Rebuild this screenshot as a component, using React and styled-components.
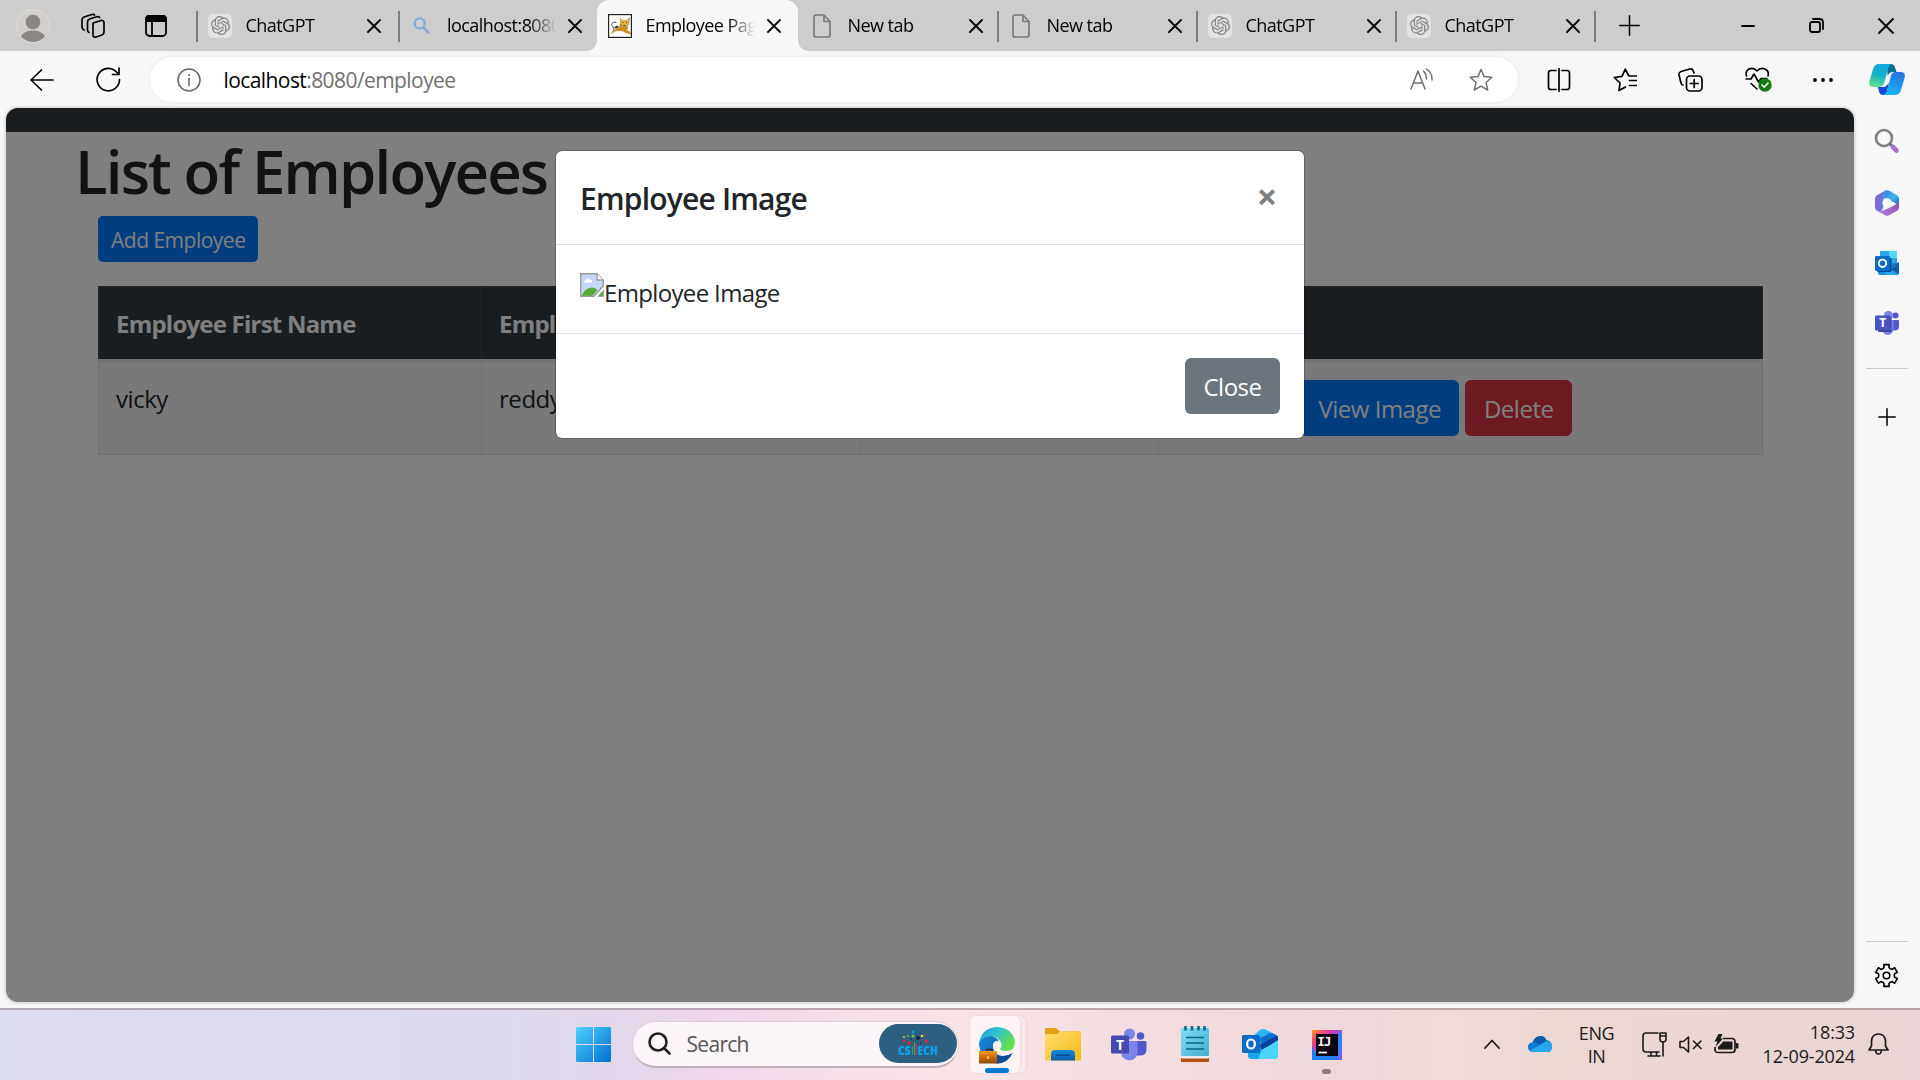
import React from 'react';
import styled, { createGlobalStyle } from 'styled-components';
import { SiOpenai } from 'react-icons/si';

const Global = createGlobalStyle`
  *, *::before, *::after { box-sizing: border-box; }
  html, body { margin: 0; padding: 0; }
  body { overflow: hidden; font-family: "Open Sans", "Noto Sans", sans-serif; color: #000; }
  button { font-family: inherit; border: 0; padding: 0; background: none; color: inherit; }
`;

const Desktop = styled.div`
  width: 1920px;
  height: 1080px;
  display: flex;
  flex-direction: column;
  background: #f7f7f7;
`;

/* ---------- tab strip ---------- */
const TabStrip = styled.header`
  height: 51px;
  flex: none;
  display: flex;
  background: #cdcdcd;
`;
const StripTools = styled.div`
  width: 196px;
  display: flex;
  align-items: center;
  padding-left: 16px;
  svg { flex: none; display: block; }
`;
const ToolGap = styled.span`
  width: ${(p) => p.$w}px;
  flex: none;
`;
const TabItem = styled.div`
  width: ${(p) => p.$w}px;
  flex: none;
  display: flex;
  align-items: center;
  padding-left: 10px;
  border-style: solid;
  border-color: transparent;
  border-image: ${(p) =>
    p.$bare ? 'none' : 'linear-gradient(transparent 12px, #7d7d7d 12px, #7d7d7d 41px, transparent 41px) 1'};
  border-width: 0 0 0 2px;
`;
const ActiveTab = styled(TabItem)`
  position: relative;
  border: 0;
  padding-left: 11px;
  background: #f7f7f7;
  border-radius: 12px 12px 0 0;
  &::before, &::after {
    content: '';
    position: absolute;
    bottom: 0;
    width: 10px;
    height: 10px;
  }
  &::before { left: -10px; background: radial-gradient(circle at 0 0, transparent 9.5px, #f7f7f7 10px); }
  &::after { right: -10px; background: radial-gradient(circle at 100% 0, transparent 9.5px, #f7f7f7 10px); }
`;
const Favicon = styled.span`
  width: 24px;
  height: 24px;
  flex: none;
  display: flex;
  align-items: center;
  justify-content: center;
  border-radius: 5px;
  color: #858585;
  background: ${(p) => (p.$tile ? '#e2e2e2' : 'transparent')};
`;
const TabTitle = styled.span`
  width: 110px;
  flex: none;
  margin-left: 13.5px;
  overflow: hidden;
  white-space: nowrap;
  font-size: 18px;
  line-height: 26px;
  letter-spacing: -0.55px;
  padding-bottom: 1px;
  mask-image: linear-gradient(90deg, #000 82px, transparent 109px);
`;
const CloseTab = styled.button`
  width: 30px;
  height: 30px;
  margin-left: 3px;
  display: flex;
  align-items: center;
  justify-content: center;
`;
const NewTab = styled.button`
  width: 68px;
  display: flex;
  align-items: center;
  justify-content: center;
  border-image: linear-gradient(transparent 12px, #7d7d7d 12px, #7d7d7d 41px, transparent 41px) 1;
  border-style: solid;
  border-width: 0 0 0 2px;
`;
const WindowButtons = styled.div`
  margin-left: auto;
  display: flex;
`;
const WindowButton = styled.button`
  width: 69px;
  display: flex;
  align-items: center;
  justify-content: center;
`;

/* ---------- address bar ---------- */
const Toolbar = styled.div`
  height: 57px;
  flex: none;
  display: flex;
  align-items: center;
  padding: 0 0 0 30px;
  svg { display: block; flex: none; }
`;
const AddressBar = styled.div`
  width: 1368px;
  height: 45px;
  margin: 0 29px 0 29px;
  padding: 0 25px 0 27px;
  display: flex;
  align-items: center;
  border-radius: 23px;
  background: #fff;
  box-shadow: 0 0 2px 1px #ededed;
`;
const Url = styled.span`
  flex: 1;
  margin-left: 22.5px;
  font-size: 21px;
  line-height: 30px;
  letter-spacing: -0.58px;
  color: #707070;
  b { font-weight: 400; color: #000; }
`;
const AddressActions = styled.div`
  display: flex;
  gap: 35px;
`;
const ToolbarIcons = styled.div`
  flex: 1;
  display: flex;
  align-items: center;
  gap: 41.5px;
`;
const CopilotSlot = styled.div`
  width: 66px;
  margin-left: auto;
  padding-left: 15px;
`;

/* ---------- middle ---------- */
const Middle = styled.div`
  flex: 1;
  display: flex;
  padding: 0 0 6px 6px;
`;
const Viewport = styled.main`
  width: 1848px;
  height: 894px;
  position: relative;
  overflow: hidden;
  border-radius: 12px;
  background: #fff;
  color: #212529;
  box-shadow: 0 0 3px 1px #cfcfcf;
`;
const NavBar = styled.div`
  height: 24px;
  background: #343a40;
`;
const PageTitle = styled.h1`
  margin: 0;
  padding: 3px 0 0 69px;
  font-size: 60px;
  line-height: 72px;
  font-weight: 550;
  letter-spacing: -1.85px;
`;
const Container = styled.div`
  padding: 9px 91px 0 92px;
`;
const Button = styled.button`
  display: inline-block;
  height: ${(p) => (p.$small ? 46 : 56)}px;
  padding: 2px ${(p) => (p.$small ? 13 : 18.5)}px 0;
  border-radius: ${(p) => (p.$small ? 5 : 6)}px;
  font-size: ${(p) => (p.$small ? 21 : 24)}px;
  line-height: 1;
  letter-spacing: -0.5px;
  white-space: nowrap;
  color: #fff;
  background: ${(p) => p.$bg};
`;
const AddButton = styled(Button)`
  width: 160px;
  display: block;
`;
const Table = styled.div`
  width: 1665px;
  margin-top: 24px;
  font-size: 24px;
  line-height: 36px;
`;
const Row = styled.div`
  display: grid;
  grid-template-columns: 382px 379px 298px 1fr;
`;
const HeadRow = styled(Row)`
  height: 73px;
  color: #fff;
  font-weight: 700;
  letter-spacing: -0.78px;
  background: #343a40;
  border: 1px solid #454d55;
  border-bottom: 0;
`;
const BodyRow = styled(Row)`
  height: 96px;
  letter-spacing: -0.45px;
  background: #f2f2f2;
  border: 1px solid #dee2e6;
  border-top: 3px solid #dee2e6;
`;
const Cell = styled.div`
  padding: 19px 0 0 17px;
  white-space: nowrap;
  &:not(:first-child) { border-left: 1px solid ${(p) => (p.$head ? '#454d55' : '#dee2e6')}; }
`;
const ActionsCell = styled(Cell)`
  display: flex;
  align-items: flex-start;
  gap: 6px;
  padding: 18px 0 0 141px;
`;

/* ---------- modal ---------- */
const Backdrop = styled.div`
  position: absolute;
  inset: 0;
  display: flex;
  align-items: flex-start;
  justify-content: center;
  padding-top: 43px;
  background: rgba(0, 0, 0, 0.5);
`;
const Modal = styled.section`
  width: 748px;
  height: 287px;
  display: flex;
  flex-direction: column;
  border-radius: 6px;
  background: #fff;
  box-shadow: 0 0 0 1px rgba(0, 0, 0, 0.2);
`;
const ModalHeader = styled.div`
  height: 94px;
  padding: 24px;
  display: flex;
  justify-content: space-between;
  border-bottom: 1px solid #dee2e6;
`;
const ModalTitle = styled.h5`
  margin: 1px 0 0;
  font-size: 30px;
  line-height: 45px;
  font-weight: 550;
  letter-spacing: -0.8px;
`;
const Dismiss = styled.button`
  width: 26px;
  height: 44px;
  font-size: 36px;
  line-height: 42px;
  font-weight: 700;
  color: #808080;
`;
const ModalBody = styled.div`
  height: 89px;
  padding: 28px 24px 0;
  display: flex;
  align-items: flex-start;
  border-bottom: 1px solid #dee2e6;
  font-size: 24px;
  line-height: 36px;
  letter-spacing: -0.65px;
`;
const AltText = styled.span`
  margin-top: 2px;
`;
const ModalFooter = styled.div`
  padding: 24px;
  display: flex;
  justify-content: flex-end;
`;

/* ---------- sidebar ---------- */
const Sidebar = styled.aside`
  width: 66px;
  display: flex;
  flex-direction: column;
  align-items: center;
  padding: 20px 1px 14px 0;
  svg { display: block; }
`;
const SideApps = styled.div`
  display: flex;
  flex-direction: column;
  align-items: center;
  gap: 35.5px;
  margin-bottom: 33px;
`;
const Rule = styled.hr`
  width: 42px;
  height: 1px;
  margin: 0;
  border: 0;
  background: #cbcbcb;
`;
const SideAdd = styled.button`
  margin: 39px 0 auto;
`;
const SideSettings = styled.button`
  margin-top: 21px;
`;

/* ---------- taskbar ---------- */
const Taskbar = styled.footer`
  height: 72px;
  flex: none;
  display: flex;
  align-items: center;
  padding: 0 0 2px 576px;
  border-top: 2px solid rgba(120, 100, 105, 0.45);
  background: linear-gradient(90deg, #dbdcee 0, #ddd9ec 500px, #e2d7ea 610px, #efd7ec 720px, #f6e0e8 850px, #f8e4e6 960px, #f3dbde 1180px, #eed7d8 1380px, #f1dad9 1450px, #ecd7d3 1560px, #e9d5d5 1920px);
  svg { display: block; flex: none; }
`;
const SearchBox = styled.div`
  width: 327px;
  height: 47px;
  margin: 0 10px 0 21px;
  padding: 0 1px 0 15px;
  display: flex;
  align-items: center;
  border: 1px solid #e0cddb;
  border-bottom: 2px solid #bfb0ba;
  border-radius: 24px;
  background: #fcf5f9;
`;
const SearchLabel = styled.span`
  flex: 1;
  margin-left: 15.5px;
  font-size: 21px;
  letter-spacing: -0.7px;
  color: #555;
`;
const Badge = styled.span`
  width: 78px;
  height: 39px;
  display: flex;
  align-items: flex-end;
  justify-content: center;
  padding-bottom: 8px;
  border-radius: 20px;
  background: #2d6080;
  color: #0d9fe8;
  font-size: 13px;
  line-height: 9px;
  font-weight: 800;
  font-stretch: 75%;
`;
const AppTile = styled.div`
  width: 52px;
  height: 59px;
  display: flex;
  flex-direction: column;
  align-items: center;
  justify-content: space-between;
  padding: 11px 0 0 4px;
  border: 1px solid #eedbe0;
  border-radius: 7px;
  background: #fdf3f5;
  box-shadow: 6px 0 0 -1px #f9e8eb, 6px 0 0 0 #ecd6db;
`;
const Indicator = styled.i`
  width: ${(p) => p.$w}px;
  height: 5px;
  border-radius: 3px;
  background: ${(p) => p.$color};
`;
const PinnedApps = styled.div`
  display: flex;
  align-items: center;
  gap: 33.5px;
  margin-left: 24px;
  & > svg:first-child { margin-right: -3.5px; }
`;
const RunningApp = styled.div`
  height: 59px;
  display: flex;
  flex-direction: column;
  align-items: center;
  justify-content: space-between;
  padding-top: 15px;
`;
const Tray = styled.div`
  flex: 1;
  display: flex;
  align-items: center;
  justify-content: flex-end;
  padding-right: 31px;
  font-size: 18px;
  line-height: 23px;
  color: #1a1a1a;
`;
const Lang = styled.div`
  width: 36px;
  margin: 2px 27px 0 27px;
  text-align: center;
  letter-spacing: -0.4px;
`;
const Clock = styled.div`
  margin: 0 13px 1px 24px;
  text-align: right;
  line-height: 24px;
  letter-spacing: -0.15px;
  white-space: nowrap;
`;
const StatusIcons = styled.div`
  display: flex;
  align-items: center;
  gap: 12px;
`;

const Line = ({ w, h = w, vb, sw = 1.6, color = '#1a1a1a', children }) => (
  <svg width={w} height={h} viewBox={vb || `0 0 ${w} ${h}`} fill="none" stroke={color} strokeWidth={sw} strokeLinecap="round" strokeLinejoin="round">
    {children}
  </svg>
);

const Cross = ({ size = 14, sw = 1.8 }) => (
  <Line w={size} sw={sw} color="#000">
    <path d={`M1 1L${size - 1} ${size - 1}M${size - 1} 1L1 ${size - 1}`} />
  </Line>
);

const TomcatIcon = () => (
  <svg width="24" height="24" viewBox="0 0 24 24">
    <rect x=".6" y=".6" width="22.8" height="22.8" fill="#fff" stroke="#222" strokeWidth="1.2" />
    <path d="M4.500 17.500C9 14 2 12 4 9.500Q5.500 7 8.500 8.500" fill="none" stroke="#444" strokeWidth="1" />
    <path d="M1.500 20.500L5 17.500Q7 14.500 11 13L12 10H19L20 13.500L19 16L23 18.500V20.500L18 19L14 17L8 17L4 19.500Z" fill="#cf8f22" />
    <path d="M12 4L14.500 6.500H18.500L21.500 3.500L21 10L18.500 13H14.500L12.500 10Z" fill="#dfb545" stroke="#8a6a20" strokeWidth=".4" />
    <path d="M6 13.500L9 11.500L11 13L8 14.500Z" fill="#333" />
    <path d="M14.500 8.500H15.500M18 8.500H19M15.500 11.500H17.500" stroke="#3a2a10" strokeWidth=".9" />
  </svg>
);
const PageIcon = () => (
  <svg width="18" height="24" viewBox="0 0 18 24" fill="none" stroke="#7a7a7a" strokeWidth="1.7" strokeLinejoin="round">
    <path d="M3 1H11L17 7.5V21a2 2 0 0 1-2 2H3a2 2 0 0 1-2-2V3a2 2 0 0 1 2-2ZM11 1V7.5H17" />
  </svg>
);
const MagnifierIcon = () => (
  <svg width="17" height="17" viewBox="0 0 17 17" fill="none" stroke="#80abd2" strokeLinecap="round">
    <circle cx="6.7" cy="6.4" r="5" strokeWidth="2.2" />
    <path d="M10.5 10.5L15.3 15.3" strokeWidth="2.6" />
  </svg>
);

const favicons = {
  gpt: <SiOpenai size={19} />,
  search: <MagnifierIcon />,
  cat: <TomcatIcon />,
  page: <PageIcon />,
};

const tabs = [
  { icon: 'gpt', title: 'ChatGPT', width: 201.5 },
  { icon: 'search', title: 'localhost:8080', width: 199.5 },
  { icon: 'cat', title: 'Employee Page', width: 201, active: true },
  { icon: 'page', title: 'New tab', width: 199, bare: true },
  { icon: 'page', title: 'New tab', width: 199 },
  { icon: 'gpt', title: 'ChatGPT', width: 199 },
  { icon: 'gpt', title: 'ChatGPT', width: 199 },
];

const Tab = ({ icon, title, width, active, bare }) => {
  const Shell = active ? ActiveTab : TabItem;
  return (
    <Shell $bare={bare} $w={width}>
      <Favicon $tile={icon === 'gpt'}>{favicons[icon]}</Favicon>
      <TabTitle>{title}</TabTitle>
      <CloseTab><Cross /></CloseTab>
    </Shell>
  );
};

const gearPath = (() => {
  const pts = [];
  for (let i = 0; i < 6; i += 1) {
    const base = i * 60 - 90;
    [[-30, 7.7], [-17, 8.4], [-14, 11.2], [14, 11.2], [17, 8.4]].forEach(([a, r]) => {
      const t = ((base + a) * Math.PI) / 180;
      pts.push(`${(12 + r * Math.cos(t)).toFixed(2)} ${(12.5 + r * Math.sin(t)).toFixed(2)}`);
    });
  }
  return `M${pts.join('L')}Z`;
})();

const CopilotIcon = () => (
  <svg width="36" height="33" viewBox="0 0 36 33">
    <defs>
      <linearGradient id="cpA" x1=".6" y1="0" x2=".3" y2="1">
        <stop offset="0" stopColor="#0fa7e0" /><stop offset=".5" stopColor="#14b3c4" /><stop offset="1" stopColor="#62e28c" />
      </linearGradient>
      <linearGradient id="cpB" x1=".6" y1="0" x2=".4" y2="1">
        <stop offset="0" stopColor="#2a72dc" /><stop offset="1" stopColor="#16b4fb" />
      </linearGradient>
    </defs>
    <path d="M18 1H22Q25 1 26 4.500L27.500 9H24Q20 9 18.500 13Z" fill="#0b6c94" />
    <path d="M9 24H16L20 20L17 32H14Q11 32 10.200 29Z" fill="#1747d6" />
    <path d="M10 1H23Q19.500 2 18.500 7L15.500 19Q14 24 10 24H4Q-1 24 .5 18L4 6Q5.500 1 10 1Z" fill="url(#cpA)" />
    <path d="M26 9H32Q37 9 35.500 15L32 27Q30.500 32 26 32H14Q17.500 31 18.500 26L21.500 14Q23 9 26 9Z" fill="url(#cpB)" />
  </svg>
);

const StarPath = 'M12 1.500L15 8.600L22.800 9.300L17 14.500L18.700 22.200L12 18.200L5.300 22.200L7 14.500L1.200 9.300L9 8.600Z';

const BrokenImage = () => (
  <svg width="24" height="24" viewBox="0 0 24 24">
    <path d="M.7 .7H17L23.300 7V13L14 23.300H.7Z" fill="#c5d7f5" stroke="#9a9a9a" strokeWidth="1.4" />
    <path d="M17 .7V7H23.300" fill="#fff" stroke="#9a9a9a" strokeWidth="1.4" />
    <path d="M4 9.500Q4 7 6.500 7Q7.500 4 10 6.500Q12.500 7 12 9.500Z" fill="#fff" />
    <path d="M1.500 22.800Q5 15 12 14.500Q15.500 14.500 17.500 17L12.500 22.800Z" fill="#56ab35" />
    <path d="M23.500 17V23.500H18Z" fill="#56ab35" stroke="#9a9a9a" strokeWidth=".8" />
  </svg>
);

const TeamsIcon = ({ size, h = size }) => (
  <svg width={size} height={h} viewBox="0 0 36 33">
    <circle cx="29.500" cy="8" r="3.800" fill="#5059c9" />
    <circle cx="18.500" cy="6" r="5.500" fill="#7b83eb" />
    <path d="M24 13H34.500Q35.500 13 35.500 14.500V22Q35 27 30 27.500H24Z" fill="#5059c9" />
    <path d="M10 13H26.500V24Q26 32 18.500 32.500Q11 32 10 24Z" fill="#7b83eb" />
    <rect x="0" y="7.500" width="18" height="18" rx="1.600" fill="#4549b0" />
    <text x="9" y="21.500" fontFamily="Open Sans, sans-serif" fontWeight="700" fontSize="14" textAnchor="middle" fill="#fff">T</text>
  </svg>
);
const SideTeamsIcon = () => (
  <svg width="24" height="24" viewBox="0 0 24 24">
    <circle cx="20.500" cy="4.500" r="3" fill="#5059c9" />
    <circle cx="13.500" cy="4.500" r="4.500" fill="#7b83eb" />
    <path d="M16 9H23Q24 9 24 10V16Q23.500 19.500 20 19.500H16Z" fill="#5059c9" />
    <path d="M7 9H18.500V17.500Q18 24 13 24Q8 24 7 18Z" fill="#7b83eb" />
    <rect x="3" y="6" width="13.500" height="15" rx="1.300" fill="#3a3f92" />
    <rect x="0" y="4.500" width="15.500" height="15" rx="1.300" fill="#4b53bc" />
    <text x="7.750" y="16.300" fontFamily="Open Sans, sans-serif" fontWeight="700" fontSize="12" textAnchor="middle" fill="#fff">T</text>
  </svg>
);

const SideSearchIcon = () => (
  <svg width="26" height="26" viewBox="0 0 26 26" fill="none" strokeLinecap="round">
    <circle cx="10" cy="10" r="8" stroke="#7f7f7f" strokeWidth="2.600" />
    <path d="M16 16L18 18" stroke="#6b6b6b" strokeWidth="2.600" />
    <path d="M19 19L22.500 22.500" stroke="#a673d4" strokeWidth="4.600" />
  </svg>
);
const M365Icon = () => (
  <svg width="24" height="26" viewBox="0 0 24 26">
    <defs>
      <linearGradient id="mA" x1="0" y1="0" x2="1" y2="0"><stop offset="0" stopColor="#8f63d2" /><stop offset="1" stopColor="#4a86e0" /></linearGradient>
      <linearGradient id="mB" x1="0" y1="0" x2="1" y2="1"><stop offset="0" stopColor="#2c7fd8" /><stop offset=".6" stopColor="#49b4f0" /><stop offset="1" stopColor="#1f52b8" /></linearGradient>
      <linearGradient id="mC" x1="0" y1="0" x2="1" y2="0"><stop offset="0" stopColor="#b78ae6" /><stop offset="1" stopColor="#9153b8" /></linearGradient>
    </defs>
    <path d="M10 .8Q12 -.3 14 .8L22.500 5.500Q24 6.500 24 8.500V15L18 12L8 8Z" fill="url(#mB)" />
    <path d="M24 12.500V17.500Q24 19.500 22.500 20.500L14 25.200Q12 26.300 10 25.200L1.500 20.500L8 20.500L16 17Z" fill="url(#mC)" />
    <path d="M10 .8L12 .2Q8.500 3 8.500 8V16Q8 20 5 21.800L1.500 20.500Q0 19.500 0 17.500V8.500Q0 6.500 1.500 5.500Z" fill="url(#mA)" />
    <circle cx="12" cy="13" r="4.700" fill="#f7f7f7" />
  </svg>
);
const SideOutlook = () => (
  <svg width="24" height="24" viewBox="0 0 24 24">
    <rect x="5" y="0" width="17" height="14" rx="1" fill="#28a8ea" />
    <path d="M14 0H22V7H14Z" fill="#50d9ff" />
    <path d="M3 12H24V22Q24 24 22 24H5Q3 24 3 22Z" fill="#1490df" />
    <path d="M24 11L14 17L24 23Z" fill="#0a5ea8" />
    <path d="M24 13L15.500 18L22.500 24H12L8 20Z" fill="#28a8ea" />
    <rect x="2" y="7" width="14.500" height="14" rx="1.300" fill="#0b4a86" />
    <rect x="0" y="5" width="15" height="15" rx="1.300" fill="#0a6cc8" />
    <circle cx="7.500" cy="12.300" r="3.700" fill="none" stroke="#fff" strokeWidth="1.900" />
  </svg>
);

const WindowsLogo = () => (
  <svg width="35" height="35" viewBox="0 0 35 35">
    <defs>
      <linearGradient id="win" gradientUnits="userSpaceOnUse" x1="0" y1="0" x2="35" y2="35"><stop offset="0" stopColor="#4fd0ff" /><stop offset="1" stopColor="#0070d0" /></linearGradient>
    </defs>
    <path fill="url(#win)" d="M1.500 0H17V17H0V1.500Q0 0 1.500 0ZM18 0H33.500Q35 0 35 1.500V17H18ZM0 18H17V35H1.500Q0 35 0 33.500ZM18 18H35V33.500Q35 35 33.500 35H18Z" />
  </svg>
);
const BadgeTree = () => (
  <svg width="7" height="15" viewBox="0 0 7 15" overflow="visible">
    <path d="M1.500 15V6M3.500 15V2" stroke="#3da55c" strokeWidth="1" />
    <path d="M5 15V4" stroke="#d83a3a" strokeWidth="1" />
    <path d="M6.500 15Q5.500 10 7 5" stroke="#6a3b8c" strokeWidth="1" fill="none" />
    <circle cx="2" cy="-8" r="1.500" fill="#0d9fe8" /><circle cx="2" cy="-4" r="1.500" fill="#7bc043" />
    <circle cx="-2" cy="3" r="1.700" fill="#e8242c" /><circle cx="7" cy="-2" r="1.900" fill="#241a3c" />
    <circle cx="11" cy="-4" r="1.300" fill="#f0d22c" /><circle cx="15" cy="1" r="1.700" fill="#e8242c" />
    <circle cx="-7" cy="1" r="1.300" fill="#e8242c" /><circle cx="-7" cy="-3" r="1" fill="#f0d22c" />
    <circle cx="10" cy="3" r="1.200" fill="#5a2c78" /><circle cx="-3" cy="-4" r="1" fill="#7bc043" />
    <circle cx="14" cy="-5" r=".8" fill="#e83a8c" /><circle cx="0" cy="-1" r="1.100" fill="#1c3c50" />
  </svg>
);
const EdgeIcon = () => (
  <svg width="36" height="37" viewBox="0 0 36 37">
    <defs>
      <linearGradient id="eA" x1="0" y1="0" x2="1" y2=".5"><stop offset="0" stopColor="#1b9de2" /><stop offset=".5" stopColor="#2fc3cf" /><stop offset="1" stopColor="#66e04a" /></linearGradient>
      <linearGradient id="eB" x1="0" y1="0" x2="1" y2="1"><stop offset="0" stopColor="#1a86d8" /><stop offset="1" stopColor="#0c59a4" /></linearGradient>
      <linearGradient id="eC" x1="0" y1="0" x2="0" y2="1"><stop offset="0" stopColor="#f39a1c" /><stop offset=".5" stopColor="#c76a0a" /><stop offset="1" stopColor="#8a4a0c" /></linearGradient>
    </defs>
    <path d="M0 17Q0 9 10 8.500Q18 9 20 15Q14 15 14 20Q15 28 23 29Q29 29 33.500 26Q29 36 18 36.500Q2 35 0 17Z" fill="url(#eB)" />
    <path d="M16 27Q23 32 33.500 26Q29 36 18 36.500Z" fill="#124c96" />
    <path d="M0 17Q2 1 18 0Q34 1 36 15Q36 24 27 24Q21 24 21 22Q23 20 22.500 17Q20 9 11 9Q3 10 0 17Z" fill="url(#eA)" />
    <path d="M14 19Q14 14 18 14Q22.500 14.500 22 18.500Q21 21 21 22Q22 24 27 24Q31 24 33.500 26Q28 28.500 22 27.500Q15 25.500 14 19Z" fill="#fdf3f5" />
    <path d="M8 24V22.500H13V24" fill="none" stroke="#3a2a20" strokeWidth="1.500" />
    <rect x="0" y="24" width="18" height="12.500" fill="url(#eC)" />
    <circle cx="9" cy="30.500" r="1.300" fill="#ffd34d" />
  </svg>
);
const FolderIcon = () => (
  <svg width="36" height="33" viewBox="0 0 36 33">
    <defs>
      <linearGradient id="fo" x1="0" y1="0" x2="1" y2="1"><stop offset="0" stopColor="#ffdd6e" /><stop offset="1" stopColor="#f8b913" /></linearGradient>
      <linearGradient id="fb" x1="0" y1="0" x2="0" y2="1"><stop offset="0" stopColor="#1a8ad6" /><stop offset="1" stopColor="#0a5fb0" /></linearGradient>
    </defs>
    <path d="M0 1.500Q0 0 1.500 0H11L15 3.500H35Q36 3.500 36 5V10H0Z" fill="#e0a012" />
    <path d="M0 7Q0 6 1.500 6H12L15 3.500H36V31Q36 32.500 34.500 32.500H1.500Q0 32.500 0 31Z" fill="url(#fo)" />
    <path d="M6 32.500V26Q6 22 10 22H26Q30 22 30 26V32.500Z" fill="url(#fb)" />
    <path d="M11 27.300H25" stroke="#0a4c8c" strokeWidth="1.500" />
  </svg>
);
const NotepadIcon = () => (
  <svg width="28" height="36" viewBox="0 0 28 36">
    <defs><linearGradient id="np" x1="0" y1="0" x2="1" y2="1"><stop offset="0" stopColor="#7fe0f2" /><stop offset="1" stopColor="#42acd0" /></linearGradient></defs>
    <rect x="0" y="31" width="28" height="5" rx="1" fill="#b3500f" />
    <rect x="0" y="26" width="28" height="6.500" rx="1" fill="#ececec" />
    <rect x="0" y="2" width="28" height="28" rx="1.500" fill="url(#np)" />
    <path d="M5 11.500H23M5 17H23M5 23H23" stroke="#0a6a86" strokeWidth="1.700" />
    <path d="M4.500 0V4.500M11 0V4.500M17.500 0V4.500M23.500 0V4.500" stroke="#0a6a86" strokeWidth="2.600" />
  </svg>
);
const OutlookIcon = () => (
  <svg width="36" height="30" viewBox="0 0 36 30">
    <path d="M6 11L19 .5Q21 -.5 23 .5L34 6Q36 7.500 36 9V26Q36 30 32 30H10Q6 30 6 26Z" fill="#1d9ae6" />
    <path d="M10 8L19 .5Q21 -.5 23 .5L28 3L14 14Z" fill="#2fb4f2" />
    <path d="M18 9L30 4L34 6Q36 7.500 36 9L20 19Z" fill="#0b6ecb" />
    <path d="M18 16L35 6.500Q36 7.500 36 11L20 22Z" fill="#0a3f96" />
    <path d="M36 11.500V26Q36 30 32 30H10Q8 30 7 28Z" fill="#4bd5fb" />
    <path d="M6 24L20 21L16 30H10Q6 30 6 26Z" fill="#1aa6ea" />
    <rect x="0" y="6" width="18" height="18" rx="1.500" fill="#0f6cc4" />
    <ellipse cx="9" cy="15" rx="3.900" ry="4.500" fill="none" stroke="#fff" strokeWidth="2.200" />
  </svg>
);
const IntelliJIcon = () => (
  <svg width="30" height="30" viewBox="0 0 30 30">
    <defs><linearGradient id="ij" x1="0" y1="0" x2="1" y2="1"><stop offset="0" stopColor="#ff9a1c" /><stop offset=".2" stopColor="#fb4a6c" /><stop offset=".4" stopColor="#c83ac0" /><stop offset=".6" stopColor="#1c8cf8" /><stop offset="1" stopColor="#7a5cf0" /></linearGradient></defs>
    <rect width="30" height="30" fill="url(#ij)" />
    <path d="M0 16V30H26L24 25H5Z" fill="#1f7df5" />
    <rect x="4" y="4" width="22" height="22" fill="#0c0410" />
    <text x="5.500" y="15.500" fontFamily="DejaVu Sans Mono, monospace" fontWeight="700" fontSize="12" letterSpacing="-.8" fill="#fff">IJ</text>
    <path d="M6.500 22.500H15" stroke="#fff" strokeWidth="1.700" />
  </svg>
);

export default function App() {
  return (
    <Desktop>
      <Global />
      <TabStrip>
        <StripTools>
          <svg width="34" height="34" viewBox="0 0 34 34">
            <defs><clipPath id="av"><circle cx="17" cy="17" r="16" /></clipPath></defs>
            <circle cx="17" cy="17" r="16.500" fill="#d2cfcb" stroke="#dedcd8" />
            <g clipPath="url(#av)" fill="#8b8682"><circle cx="17" cy="13" r="7.300" /><ellipse cx="17" cy="30" rx="12.500" ry="8.500" /></g>
          </svg>
          <ToolGap $w={31} />
          <Line w={25} h={25} sw={1.7} color="#000">
            <path d="M12 10L20 7.500Q22 7 23 9V19Q23 21 21 22L15 24Q12 24.500 12 22ZM8 19.500Q6.500 19 6.500 17V9Q6.500 7 8.500 6L16.500 3.500Q18 3.500 18.500 4.500M3 17Q1 16 1 14V7Q1 5 3 4L11 1.500Q13 1 13.500 2" />
          </Line>
          <ToolGap $w={39} />
          <Line w={22} h={22} sw={1.8} color="#000">
            <rect x="1" y="1" width="20" height="20" rx="3.500" /><path d="M1 6V4Q1 1 4 1H18Q21 1 21 4V6Z" fill="#000" /><path d="M7 6V21" />
          </Line>
        </StripTools>
        {tabs.map((t, i) => <Tab key={i} {...t} />)}
        <NewTab><Line w={21} sw={1.5} color="#000"><path d="M10.500 .8V20.200M.8 10.500H20.200" /></Line></NewTab>
        <WindowButtons>
          <WindowButton><Line w={14} h={4} sw={1.8} color="#000"><path d="M1 2H13" /></Line></WindowButton>
          <WindowButton>
            <Line w={15} h={15} sw={1.8} color="#000"><rect x="1" y="4" width="10" height="10" rx="2" /><path d="M4 1H10.500Q14 1 14 4.500V11" /></Line>
          </WindowButton>
          <WindowButton><Cross size={16} /></WindowButton>
        </WindowButtons>
      </TabStrip>

      <Toolbar>
        <Line w={24} h={22} sw={1.7} color="#000"><path d="M23 11H1M11.500 1L1 11L11.500 21" /></Line>
        <ToolGap $w={42} />
        <Line w={25} h={25} sw={1.7} color="#000"><path d="M23.500 12.500A11.200 11.200 0 1 1 19.500 4L23 7.500M23 1V7.500H16.500" /></Line>
        <AddressBar>
          <Line w={24} color="#6b6b6b"><circle cx="12" cy="12" r="11" /><path d="M12 10.500V17.500" /><circle cx="12" cy="7" r=".6" fill="#6b6b6b" strokeWidth="1" /></Line>
          <Url><b>localhost</b>:8080/employee</Url>
          <AddressActions>
            <Line w={24} h={24} sw={1.5} color="#707070"><path d="M1 21L8 3L15 21M3.500 15H12.500M13.500 3Q16.500 6 16.500 11M16.500 1Q22.500 5 22 12" /></Line>
            <Line w={24} h={24} sw={1.5} color="#707070"><path d={StarPath} /></Line>
          </AddressActions>
        </AddressBar>
        <ToolbarIcons>
          <Line w={24} h={24} sw={1.7} color="#000"><path d="M9 2.500H4Q1.500 2.500 1.500 5V19Q1.500 21.500 4 21.500H9M15 2.500H20Q22.500 2.500 22.500 5V19Q22.500 21.500 20 21.500H15M12 .8V23.200" /></Line>
          <Line w={24} h={24} sw={1.7} color="#000"><path d="M12.500 19L6 22.500L7 15L1.300 9.500L9 8.300L12.300 1.200L15.600 7.500M16.500 8H23.500M16.500 12.500H23.500M16.500 17.500H23.500" /></Line>
          <Line w={25} h={24} sw={1.7} color="#000"><rect x="8.500" y="8" width="15.500" height="15" rx="3.500" /><path d="M16.200 11.500V19.500M12.200 15.500H20.200M5 17Q3.500 17 3 15L1 7Q.6 4.500 3 3.500L12 1Q14.500 .6 15 2.500L16 5" /></Line>
          <svg width="27" height="25" viewBox="0 0 27 25" fill="none" stroke="#000" strokeWidth="1.600" strokeLinecap="round" strokeLinejoin="round">
            <path d="M1.500 9Q0 4 4 2Q8.500 0 12 4Q15.500 0 20 2Q24.500 4 23 9M1 12H6L9 7L13.500 15L16 11.500H22M6 16.500L12 22" />
            <circle cx="20" cy="18" r="6.700" fill="#107c10" stroke="none" /><path d="M17 18L19.200 20.200L23 16" stroke="#fff" />
          </svg>
          <svg width="20" height="4" viewBox="0 0 20 4" fill="#000"><circle cx="2" cy="2" r="1.900" /><circle cx="10" cy="2" r="1.900" /><circle cx="18" cy="2" r="1.900" /></svg>
        </ToolbarIcons>
        <CopilotSlot><CopilotIcon /></CopilotSlot>
      </Toolbar>

      <Middle>
        <Viewport>
          <NavBar />
          <PageTitle>List of Employees</PageTitle>
          <Container>
            <AddButton $small $bg="#007bff">Add Employee</AddButton>
            <Table>
              <HeadRow>
                <Cell $head>Employee First Name</Cell>
                <Cell $head>Employee Last Name</Cell>
                <Cell $head />
                <Cell $head />
              </HeadRow>
              <BodyRow>
                <Cell>vicky</Cell>
                <Cell>reddy</Cell>
                <Cell />
                <ActionsCell>
                  <Button $bg="#007bff">View Image</Button>
                  <Button $bg="#dc3545">Delete</Button>
                </ActionsCell>
              </BodyRow>
            </Table>
          </Container>
          <Backdrop>
            <Modal>
              <ModalHeader>
                <ModalTitle>Employee Image</ModalTitle>
                <Dismiss>×</Dismiss>
              </ModalHeader>
              <ModalBody>
                <BrokenImage />
                <AltText>Employee Image</AltText>
              </ModalBody>
              <ModalFooter>
                <Button $bg="#6c757d">Close</Button>
              </ModalFooter>
            </Modal>
          </Backdrop>
        </Viewport>
        <Sidebar>
          <SideApps>
            <SideSearchIcon />
            <M365Icon />
            <SideOutlook />
            <SideTeamsIcon />
          </SideApps>
          <Rule />
          <SideAdd><Line w={18} sw={1.5} color="#000"><path d="M9 .8V17.200M.8 9H17.200" /></Line></SideAdd>
          <Rule />
          <SideSettings>
            <Line w={25} vb="0 0 24 25" sw={1.6} color="#000"><path d={gearPath} /><circle cx="12" cy="12.500" r="3.300" /></Line>
          </SideSettings>
        </Sidebar>
      </Middle>

      <Taskbar>
        <WindowsLogo />
        <SearchBox>
          <Line w={23} h={23} sw={2.6} color="#222"><circle cx="10" cy="10" r="8.500" /><path d="M16 16L21.500 21.500" /></Line>
          <SearchLabel>Search</SearchLabel>
          <Badge>CS<BadgeTree />ECH</Badge>
        </SearchBox>
        <AppTile>
          <EdgeIcon />
          <Indicator $w={24} $color="#0078d4" />
        </AppTile>
        <PinnedApps>
          <FolderIcon />
          <TeamsIcon size={36} h={33} />
          <NotepadIcon />
          <OutlookIcon />
          <RunningApp>
            <IntelliJIcon />
            <Indicator $w={9} $color="#8b7d7f" />
          </RunningApp>
        </PinnedApps>
        <Tray>
          <Line w={16} h={10} sw={1.8}><path d="M1 9L8 1.500L15 9" /></Line>
          <ToolGap $w={28} />
          <svg width="24" height="16" viewBox="0 0 24 16">
            <path d="M5 6Q7 0 12.500 0Q17 0 18.500 4Q24 5 24 10.500Q24 16 19 16H5.500Q0 16 0 10.500Q0 7 5 6Z" fill="#0f78d4" />
            <path d="M8 1.500Q12 -1 16 1.300Q18 3 18.500 5L12 8.500L5 5.500Q6 3 8 1.500Z" fill="#0a5cb0" />
            <path d="M2 14.500L17 6Q19 4.500 21 6Q24 7.500 24 11Q23.500 15.500 19 16H5.500Q3.500 16 2 14.500Z" fill="#28a8ea" />
          </svg>
          <Lang>ENG<br />IN</Lang>
          <StatusIcons>
            <Line w={25} h={25} sw={1.6}><path d="M16 1H4Q1 1 1 4V17Q1 20 4 20H17M6 24H18M9 20V24M14.500 20V24M21 10V24" /><path d="M18 1H24V7Q24 10 21 10Q18 10 18 7ZM18 4H24" /></Line>
            <Line w={23} h={17} sw={1.6}><path d="M1 5.500H4.500L9.500 1V16L4.500 11.500H1ZM14.500 5L22 12.500M22 5L14.500 12.500" /></Line>
            <svg width="25" height="20" viewBox="0 0 25 20">
              <path d="M9 4.500H18Q21 4.500 21 7.500V15.500Q21 18.500 18 18.500H4Q1 18.500 1 15.500V13" fill="none" stroke="#1a1a1a" strokeWidth="1.700" />
              <path d="M9 7.500H18.500V15.500H4V13L8 9Z" fill="#1a1a1a" /><path d="M22 9H23.500Q24.500 9 24.500 10.500V13Q24.500 14.500 23.500 14.500H22Z" fill="#1a1a1a" />
              <path d="M4.500 0H8.500L6.500 4.500H9L1.500 13L3.500 7.500H.5Z" fill="#1a1a1a" />
            </svg>
          </StatusIcons>
          <Clock>18:33<br />12-09-2024</Clock>
          <Line w={21} h={22} sw={1.7}><path d="M1 17H20L17.500 13V8Q17 1 10.500 1Q4 1 3.500 8V13ZM7.500 17.500Q8 21 10.500 21Q13 21 13.500 17.500" /></Line>
        </Tray>
      </Taskbar>
    </Desktop>
  );
}
